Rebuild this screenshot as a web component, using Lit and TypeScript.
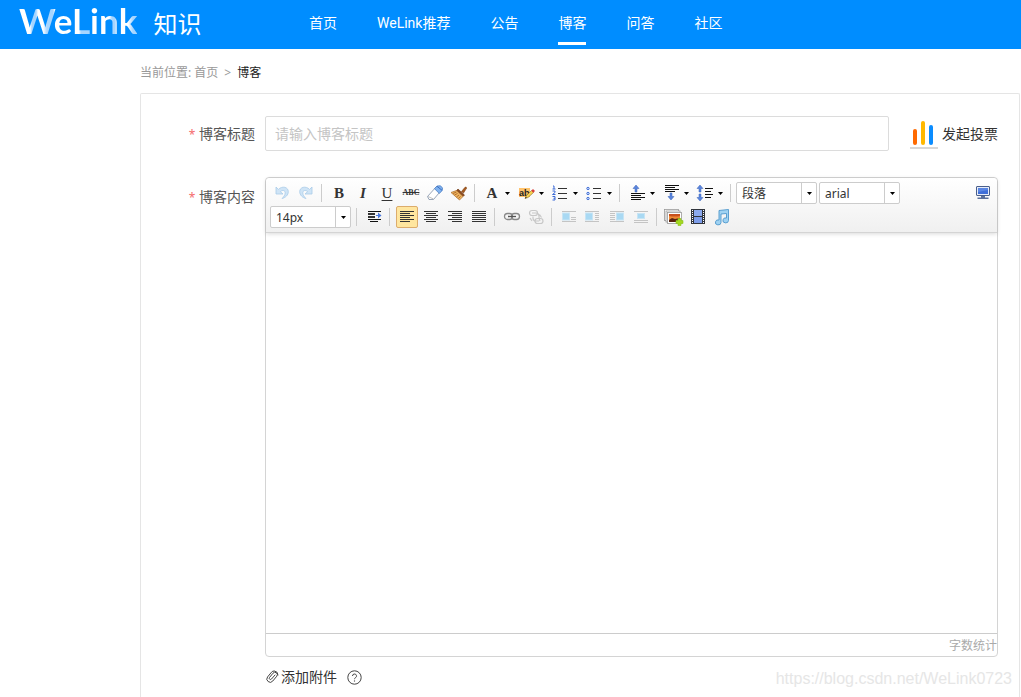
import { LitElement, html, svg, css } from "lit";
import { customElement, property } from "lit/decorators.js";

const line = (x: number, y: number, w: number, fill = "#333") =>
  svg`<rect x=${x} y=${y} width=${w} height="1" fill=${fill}></rect>`;

const rows = (kind: string) =>
  [4, 6, 8, 10, 12, 14].map((y, i) => {
    const w = kind === "justify" || i % 2 === 0 ? 14 : 10;
    const x = kind === "right" ? 17 - w : kind === "center" ? 3 + (14 - w) / 2 : 3;
    return line(x, y, w);
  });

const upArrow = (x: number, y: number) =>
  svg`<path d="M${x} ${y}l3 3.5h-2v3.500h-2v-3.500h-2z" fill="#5b86dd" stroke="#3a62b8" stroke-width=".5"></path>`;
const downArrow = (x: number, y: number) =>
  svg`<path d="M${x} ${y}l3-3.500h-2v-3.500h-2v3.500h-2z" fill="#5b86dd" stroke="#3a62b8" stroke-width=".5"></path>`;

const pale = "#c4c4c4";
const picture = (x: number) =>
  svg`<rect x=${x} y="6" width="7" height="7" fill="#a9d9f3" stroke="#c7e4f4" stroke-width="1"></rect>`;

const icons: Record<string, unknown> = {
  undo: svg`<path d="M4 4v7h7l-2.600-2.300c2-2.200 5-1.200 4.800 1.300-.1 2-1.300 3.700-3.200 5.500 3.500-.8 6.300-3.500 6.300-6.800 0-4.700-6-6.200-9.900-2.300z" fill="#cfe4f6" stroke="#a9cbe8" stroke-width=".8"></path>`,
  redo: svg`<path d="M16 4v7h-7l2.600-2.300c-2-2.200-5-1.200-4.800 1.300.1 2 1.300 3.700 3.200 5.500-3.500-.8-6.300-3.500-6.300-6.800 0-4.700 6-6.200 9.900-2.300z" fill="#cfe4f6" stroke="#a9cbe8" stroke-width=".8"></path>`,
  eraser: svg`<path d="M2.500 13.500 11.500 3.500 17 6.500 8.500 16.500 4 16.500z" fill="#fff" stroke="#7d8fa8" stroke-width=".8"></path>
    <path d="M9.500 5.700 12 3 15.500 2.800 17.500 5 17.200 7.500 14.300 10.500z" fill="#7fb2f0" stroke="#4d7fc4" stroke-width=".8"></path>
    <path d="M12 3.300 17 7.300" stroke="#3d6fc0" stroke-width="1"></path><path d="M3 13.500l5.500 2.500" stroke="#b0b0b0" stroke-width=".8"></path>`,
  broom: svg`<path d="M12.500 8.500 16 4.300q1.500-1 1.500 1L14.500 10z" fill="#a85a1e" stroke="#7d3f10" stroke-width=".6"></path>
    <path d="M9 6 15.500 12 14 13.500 7.500 7.500z" fill="#8a4a20" stroke="#6d3610" stroke-width=".6"></path>
    <path d="M7.500 7.500 14 13.500 10.500 17 2 9.500z" fill="#eeb460" stroke="#a96a28" stroke-width=".7"></path>
    <path d="M8.500 10.500 5.500 12M10 12 7.500 14M11.500 13.300 9.500 15.500M7.500 9 4 10.500" stroke="#a4601f" stroke-width=".8"></path>`,
  ordered: svg`<path d="M3 3h1v3M2.500 6h3M2.500 8h2.500v1.500l-2.500 2h3M2.500 13.500h2.500v3.500h-2.500M3.500 15.300h1.500" fill="none" stroke="#3c6bd6" stroke-width="1"></path>
    ${[5, 10, 15].map((y) => line(8, y, 9))}`,
  bullets: svg`${[5.500, 10.500, 15.500].map((y) => svg`<circle cx="4" cy=${y} r="1.200" fill="#dce8ff" stroke="#3c6bd6" stroke-width="1"></circle>`)}
    ${[5, 10, 15].map((y) => line(9, y, 8))}`,
  spaceTop: svg`${upArrow(9, 2)}${line(4, 10, 14, "#111")}${line(4, 12, 10, "#111")}${line(4, 14, 14, "#111")}${line(4, 16, 10, "#111")}`,
  spaceBottom: svg`${line(4, 2, 14, "#111")}${line(4, 4, 10, "#111")}${line(4, 6, 14, "#111")}${line(4, 8, 10, "#111")}${downArrow(10, 17)}`,
  lineHeight: svg`${upArrow(5, 2)}${downArrow(5, 18)}${line(10, 5, 8, "#111")}${line(10, 8, 6, "#111")}${line(10, 11, 8, "#111")}${line(10, 14, 6, "#111")}`,
  indent: svg`${line(4, 4, 13, "#111")}<rect x="4" y="6" width="7" height="2" fill="#333"></rect><rect x="4" y="9" width="7" height="2" fill="#333"></rect>${line(4, 12, 13, "#111")}${line(6, 14, 8, "#111")}
    <path d="M12 8h2v-2.500l3.500 3-3.500 3v-2.500h-2z" fill="#4a78dd"></path>`,
  left: rows("left"),
  center: rows("center"),
  right: rows("right"),
  justify: rows("justify"),
  link: svg`<g fill="none"><rect x="2.500" y="6.500" width="8" height="6" rx="3" stroke="#888" stroke-width="1.300"></rect>
    <rect x="9.500" y="6.500" width="8" height="6" rx="3" stroke="#888" stroke-width="1.300"></rect><path d="M6 9.500h8" stroke="#555" stroke-width="1.300"></path></g>`,
  unlink: svg`<g fill="none" stroke="#c8c8c8" stroke-width="1.200"><rect x="3.500" y="3.500" width="8" height="5" rx="2.500"></rect><rect x="9" y="11.500" width="8" height="5" rx="2.500"></rect>
    <path d="M6 6h4q3 0 3 3v1q0 2 1 4M13 14h-3q-3 0-3-3v-1.500M13.500 7.500l2 3M4 11l2 3"></path></g>`,
  imgLeft: svg`${line(3, 4, 14, pale)}${picture(3.500)}${line(12, 10, 5, pale)}${line(12, 12, 5, pale)}${line(3, 14, 14, pale)}`,
  imgWrapLeft: svg`${line(2, 4, 14, pale)}${picture(2.500)}${[6, 8, 10, 12].map((y) => line(12, y, 4, pale))}${line(2, 14, 14, pale)}`,
  imgWrapRight: svg`${line(3, 4, 14, pale)}${picture(9.500)}${[6, 8, 10, 12].map((y) => line(3, y, 5, pale))}${line(3, 14, 14, pale)}`,
  imgCenter: svg`${line(3, 4, 14, pale)}<rect x="6.500" y="6.500" width="7" height="5" fill="#a9d9f3" stroke="#c7e4f4"></rect>${line(3, 13, 14, pale)}${line(3, 15, 14, pale)}`,
  image: svg`<g stroke="#999" stroke-width=".8"><rect x=".5" y="2.500" width="14" height="11" fill="#fff"></rect><rect x="2" y="4" width="14" height="11" fill="#fff"></rect><rect x="3.500" y="5.500" width="14" height="11" fill="#fff"></rect></g>
    <rect x="5" y="7" width="11" height="8" fill="#f08a35"></rect><path d="M5 7h11v2q-5 1-11 0z" fill="#c8501c"></path><path d="M5 15v-2l3-2 3 1 5-1v4z" fill="#5a2410"></path>
    <path d="M14 11.500h3v2h2v3h-2v2h-3v-2h-2v-3h2z" fill="#a4d820" stroke="#8cc41a" stroke-width=".6"></path>`,
  video: svg`<rect x="3" y="2" width="14" height="15" fill="#30343c"></rect><rect x="6" y="3" width="8" height="6" fill="#8ba9ee"></rect><rect x="6" y="10" width="8" height="6" fill="#7d9dea"></rect>
    ${[3, 5, 7, 9, 11, 13, 15].map((y) => svg`<rect x="4" y=${y} width="1" height="1" fill="#fff"></rect><rect x="15" y=${y} width="1" height="1" fill="#fff"></rect>`)}`,
  music: svg`<path d="M7 3.500 16.500 2.500v11a2.800 2.500 0 1 1-2-2.500V6.500L9 7v8.500a2.800 2.500 0 1 1-2-2.500z" fill="#9fd2f2" stroke="#4f97cc" stroke-width=".9"></path>`,
  screen: svg`<rect x="3.500" y="3.500" width="13" height="9" rx=".5" fill="#e6ecf8" stroke="#4a5f8c"></rect><rect x="5" y="5" width="10" height="6" fill="#3f6ed8"></rect><path d="M5 5h10v2l-10 2z" fill="#5a86e4"></path>
    <path d="M8 13h4v1.500h3.500v1.500h-11v-1.500h3.500z" fill="#5a6f9c"></path>`,
  highlight: svg`<rect x="3" y="5" width="11" height="9" fill="#ffc36b"></rect><text x="3" y="13" font-family="Liberation Sans" font-weight="700" font-size="9" fill="#222">ab</text>
    <path d="M9 15.500 10.500 12.500 15.500 7.500 17.500 9.500 12 14.500z" fill="#f5d352" stroke="#8a6a2a" stroke-width=".6"></path><path d="M15.300 7.700 17 6 19 8 17.200 9.700z" fill="#d9403a"></path><path d="M9 15.500l.8-1.800 1 1z" fill="#222"></path>`,
};

const glyph = (name: string) => html`<svg width="20" height="20" viewBox="0 0 20 20" aria-hidden="true">${icons[name]}</svg>`;
const caret = html`<svg width="5" height="3" viewBox="0 0 5 3" aria-hidden="true"><path d="M0 0h5L2.500 3z" fill="#000"></path></svg>`;

@customElement("tool-button")
class ToolButton extends LitElement {
  @property() icon = "";
  @property() text = "";
  @property() label = "";
  @property({ type: Boolean }) menu = false;
  @property({ type: Boolean }) active = false;

  static styles = css`
    :host { display: block; padding: 1px; }
    button { box-sizing: border-box; display: flex; align-items: center; gap: 3px; height: 22px; padding: 0; border: 1px solid transparent; border-radius: 2px; background: none; color: #333; }
    .single { width: 22px; }
    .menu { width: 32px; }
    .active { background: #ffe69f; border-color: #dcac6c; }
    svg { display: block; flex: none; }
    .char { width: 20px; flex: none; text-align: center; font: 700 15px/20px "Liberation Serif", serif; }
    .italic { font-style: italic; }
    .underline { font-weight: 400; text-decoration: underline; text-underline-offset: 2px; }
    .strike { font-size: 8px; text-decoration: line-through; }
  `;

  render() {
    const style = this.text === "I" ? "italic" : this.text === "U" ? "underline" : this.text === "ABC" ? "strike" : "";
    return html`<button type="button" aria-label=${this.label} title=${this.label}
      class="${this.menu ? "menu" : "single"} ${this.active ? "active" : ""}">
      ${this.text ? html`<span class="char ${style}">${this.text}</span>` : glyph(this.icon)}${this.menu ? caret : ""}
    </button>`;
  }
}

@customElement("tool-select")
class ToolSelect extends LitElement {
  @property() label = "";
  @property() value = "";

  static styles = css`
    :host { display: grid; width: 81px; height: 22px; margin: 1px 2px 1px 0; }
    select { grid-area: 1 / 1; box-sizing: border-box; width: 100%; height: 22px; margin: 0; padding: 1px 18px 0 5px; appearance: none; border: 1px solid #ccc; border-radius: 2px; background: #fff; color: #333; font: 12px/20px "Noto Sans", "Noto Sans CJK SC", sans-serif; }
    .drop { grid-area: 1 / 1; justify-self: end; display: grid; place-items: center; width: 15px; box-sizing: border-box; margin: 1px; border-left: 1px solid #ccc; pointer-events: none; }
  `;

  render() {
    return html`<select aria-label=${this.label}><option>${this.value}</option></select><span class="drop">${caret}</span>`;
  }
}

@customElement("rich-editor")
class RichEditor extends LitElement {
  static styles = css`
    :host { display: block; border: 1px solid #d4d4d4; border-radius: 4px; background: #fff; }
    .toolbar { position: relative; padding: 3px 2px 3px 4px; border-bottom: 1px solid #d4d4d4; border-radius: 4px 4px 0 0; background: linear-gradient(#fff, #f0f0f0); box-shadow: 0 1px 4px rgba(0, 0, 0, 0.15); }
    .row { display: flex; align-items: center; height: 24px; }
    .sep { width: 1px; height: 18px; margin: 0 5px 0 3px; background: #ccc; }
    .end { margin-left: auto; }
    textarea { display: block; box-sizing: border-box; width: 100%; height: 400px; padding: 8px; border: 0; resize: none; outline: 0; background: none; font: 14px "Liberation Sans", sans-serif; }
    .status { padding-top: 1px; border-top: 1px solid #ccc; text-align: right; font-size: 12px; line-height: 21px; color: #aaa; }
  `;

  private tool(icon: string, label: string, menu = false, active = false) {
    return html`<tool-button icon=${icon} label=${label} ?menu=${menu} ?active=${active}></tool-button>`;
  }

  private char(text: string, label: string, menu = false) {
    return html`<tool-button text=${text} label=${label} ?menu=${menu}></tool-button>`;
  }

  render() {
    const sep = html`<span class="sep"></span>`;
    return html`
      <div class="toolbar" role="toolbar">
        <div class="row">
          ${this.tool("undo", "撤销")}${this.tool("redo", "重做")}${sep}
          ${this.char("B", "加粗")}${this.char("I", "斜体")}${this.char("U", "下划线")}${this.char("ABC", "删除线")}
          ${this.tool("eraser", "清除格式")}${this.tool("broom", "格式刷")}${sep}
          ${this.char("A", "字体颜色", true)}${this.tool("highlight", "背景色", true)}${this.tool("ordered", "有序列表", true)}${this.tool("bullets", "无序列表", true)}${sep}
          ${this.tool("spaceTop", "段前距", true)}${this.tool("spaceBottom", "段后距", true)}${this.tool("lineHeight", "行间距", true)}${sep}
          <tool-select label="段落格式" value="段落"></tool-select>
          <tool-select label="字体" value="arial"></tool-select>
          <tool-button class="end" icon="screen" label="全屏"></tool-button>
        </div>
        <div class="row">
          <tool-select label="字号" value="14px"></tool-select>${sep}
          ${this.tool("indent", "首行缩进")}${sep}
          ${this.tool("left", "居左对齐", false, true)}${this.tool("center", "居中对齐")}${this.tool("right", "居右对齐")}${this.tool("justify", "两端对齐")}${sep}
          ${this.tool("link", "超链接")}${this.tool("unlink", "取消链接")}${sep}
          ${this.tool("imgLeft", "默认")}${this.tool("imgWrapLeft", "左浮动")}${this.tool("imgWrapRight", "右浮动")}${this.tool("imgCenter", "居中")}${sep}
          ${this.tool("image", "多图上传")}${this.tool("video", "视频")}${this.tool("music", "音乐")}
        </div>
      </div>
      <textarea aria-label="博客内容"></textarea>
      <div class="status">字数统计</div>
    `;
  }
}

@customElement("app-root")
class AppRoot extends LitElement {
  static styles = css`
    :host { position: relative; display: flex; flex-direction: column; min-height: 100vh; background: #fff; color: #333; font: 14px/20px "Noto Sans", "Noto Sans CJK SC", sans-serif; }
    a { color: inherit; text-decoration: none; }
    header { display: flex; align-items: center; height: 49px; padding-left: 19px; background: #008dff; color: #fff; }
    .brand { display: flex; align-items: flex-start; gap: 16px; width: 290px; height: 49px; }
    .mark { font: 700 35px/40px Lato, sans-serif; color: transparent; background-clip: text; -webkit-background-clip: text;
      background-image: linear-gradient(90deg, #fff 0 11px, #a6d5ff 13px 17px, #fff 19px 24px, #a6d5ff 28px 34px, #fff 36px 60px, #a6d5ff 62px 70px, #fff 72px 90px, #a6d5ff 93px 96px, #fff 98px 109px, #a6d5ff 114px); }
    .product { font: 24px/45px "Noto Sans CJK SC", sans-serif; }
    nav { display: flex; gap: 40px; height: 49px; font-family: Roboto, "Noto Sans CJK SC", sans-serif; }
    nav a { box-sizing: border-box; height: 45px; line-height: 46px; white-space: nowrap; }
    nav .current { border-bottom: 3px solid #fff; }
    main { display: flex; flex-direction: column; flex: 1; margin: 0 1px 0 140px; }
    .crumbs { display: flex; gap: 6px; padding: 15px 0 11px; font-size: 12px; line-height: 18px; color: #999; }
    .crumbs .here { color: #222; }
    .panel { flex: 1; display: grid; grid-template-columns: 114px minmax(0, 1fr); align-content: start; column-gap: 10px; padding: 22px 21px 0 0; border: 1px solid #e5e5e5; border-bottom: 0; border-radius: 2px 2px 0 0; }
    .label { line-height: 36px; text-align: right; color: #555; white-space: nowrap; }
    .body-label { line-height: 40px; }
    .star { font-size: 12px; color: #f56c6c; }
    .title { display: flex; align-items: center; gap: 21px; margin-bottom: 26px; }
    .title input { flex: 1; min-width: 0; box-sizing: border-box; height: 35px; padding: 0 9px; border: 1px solid #dcdcdc; border-radius: 2px; color: #333; font: inherit; }
    .title input::placeholder { color: #c4c4c4; opacity: 1; }
    .plain { display: flex; align-items: center; padding: 0; border: 0; background: none; color: #333; font: inherit; white-space: nowrap; }
    .vote { gap: 4px; }
    .attach { grid-column: 2; display: flex; align-items: center; gap: 10px; margin-top: 10px; }
    .file { gap: 2px; }
    .watermark { position: absolute; right: 9px; bottom: 8px; font: 16px/20px "Liberation Sans", sans-serif; color: #e6e6e6; pointer-events: none; }
  `;

  render() {
    const links = ["首页", "WeLink推荐", "公告", "博客", "问答", "社区"];
    return html`
      <header>
        <a class="brand" href="#"><span class="mark">WeLink</span><span class="product">知识</span></a>
        <nav>${links.map((t) => html`<a href="#" class=${t === "博客" ? "current" : ""}>${t}</a>`)}</nav>
      </header>
      <main>
        <div class="crumbs"><span>当前位置: <a href="#">首页</a></span><span>&gt;</span><span class="here">博客</span></div>
        <form class="panel">
          <label class="label" for="title"><span class="star">*</span> 博客标题</label>
          <div class="title">
            <input id="title" type="text" placeholder="请输入博客标题" />
            <button class="plain vote" type="button">
              <svg width="28" height="30" viewBox="0 0 28 30" aria-hidden="true">
                <rect x="3" y="10" width="4" height="16" rx="2" fill="#ff6a00"></rect>
                <rect x="11" y="2" width="4" height="24" rx="2" fill="#ffb800"></rect>
                <rect x="19" y="6" width="4" height="20" rx="2" fill="#0a8cff"></rect>
                <rect x="0" y="28" width="28" height="2" fill="#d8d8d8"></rect>
              </svg>
              发起投票
            </button>
          </div>
          <span class="label body-label"><span class="star">*</span> 博客内容</span>
          <rich-editor></rich-editor>
          <div class="attach">
            <button class="plain file" type="button">
              <svg width="14" height="14" viewBox="0 0 14 14" fill="none" stroke="#444" stroke-width="1" stroke-linecap="round" aria-hidden="true">
                <path d="M10 5 6.500 9a1.200 1.200 0 0 1-2-1.500L8 3.200a2.400 2.400 0 0 1 3.800 3L7.800 11a3.300 3.300 0 0 1-5.200-4.100L6.500 2.200a3.500 3.500 0 0 1 3-1.200q3.500.5 3.500 4"></path>
              </svg>
              添加附件
            </button>
            <button class="plain" type="button" aria-label="帮助">
              <svg width="15" height="15" viewBox="0 0 15 15" fill="none" stroke="#444" aria-hidden="true">
                <circle cx="7.500" cy="7.500" r="6.700"></circle>
                <path d="M5.500 6a2 2 0 1 1 3 1.700q-1 .6-1 1.500"></path><circle cx="7.500" cy="11" r=".4" fill="#444" stroke-width=".5"></circle>
              </svg>
            </button>
          </div>
        </form>
      </main>
      <div class="watermark">https://blog.csdn.net/WeLink0723</div>
    `;
  }
}
